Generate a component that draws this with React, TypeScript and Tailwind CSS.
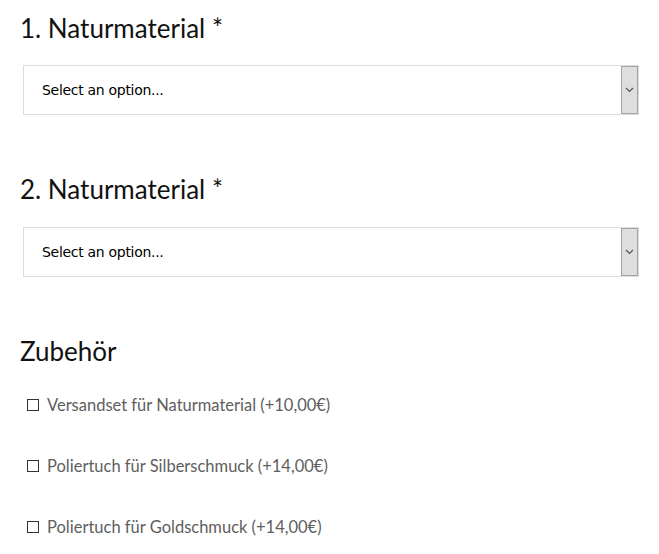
import React from "react";

function SelectBox() {
    return (
        <div className="flex h-[50px] w-[616px] border border-[#dcdcdc] bg-white">
            <div className="flex flex-1 items-center pl-[18px] text-[14px] text-black font-['DejaVu_Sans',sans-serif] tracking-[-0.3px]">
                Select an option...
            </div>
            <div className="flex w-[17px] items-center justify-center border border-[#a3a3a3] bg-[#dedede]">
                <svg width="9" height="6" viewBox="0 0 9 6" fill="none">
                    <path d="M1 1l3.5 3.5L8 1" stroke="#555" strokeWidth="1.2" />
                </svg>
            </div>
        </div>
    );
}

function Option({ label }: { label: string }) {
    return (
        <label className="flex items-center h-[20px] pl-[7px] text-[16.5px] text-[#5e5e5e]">
            <span className="mr-[8px] h-[12px] w-[12px] border border-[#333] bg-white" />
            {label}
        </label>
    );
}

export default function App() {
    return (
        <div className="w-[659px] h-[554px] bg-white px-5 font-['Lato',sans-serif] overflow-hidden">
            <h2 className="mt-[10px] h-[36px] leading-[36px] text-[26px] text-[#111]">1. Naturmaterial *</h2>
            <div className="mt-[19px] pl-[3px]">
                <SelectBox />
            </div>
            <h2 className="mt-[56px] h-[36px] leading-[36px] text-[26px] text-[#111]">2. Naturmaterial *</h2>
            <div className="mt-[20px] pl-[3px]">
                <SelectBox />
            </div>
            <h2 className="mt-[56px] h-[36px] leading-[36px] text-[26px] text-[#111]">Zubehör</h2>
            <div className="mt-[26px] flex flex-col gap-[41px]">
                <Option label="Versandset für Naturmaterial (+10,00€)" />
                <Option label="Poliertuch für Silberschmuck (+14,00€)" />
                <Option label="Poliertuch für Goldschmuck (+14,00€)" />
            </div>
        </div>
    );
}
